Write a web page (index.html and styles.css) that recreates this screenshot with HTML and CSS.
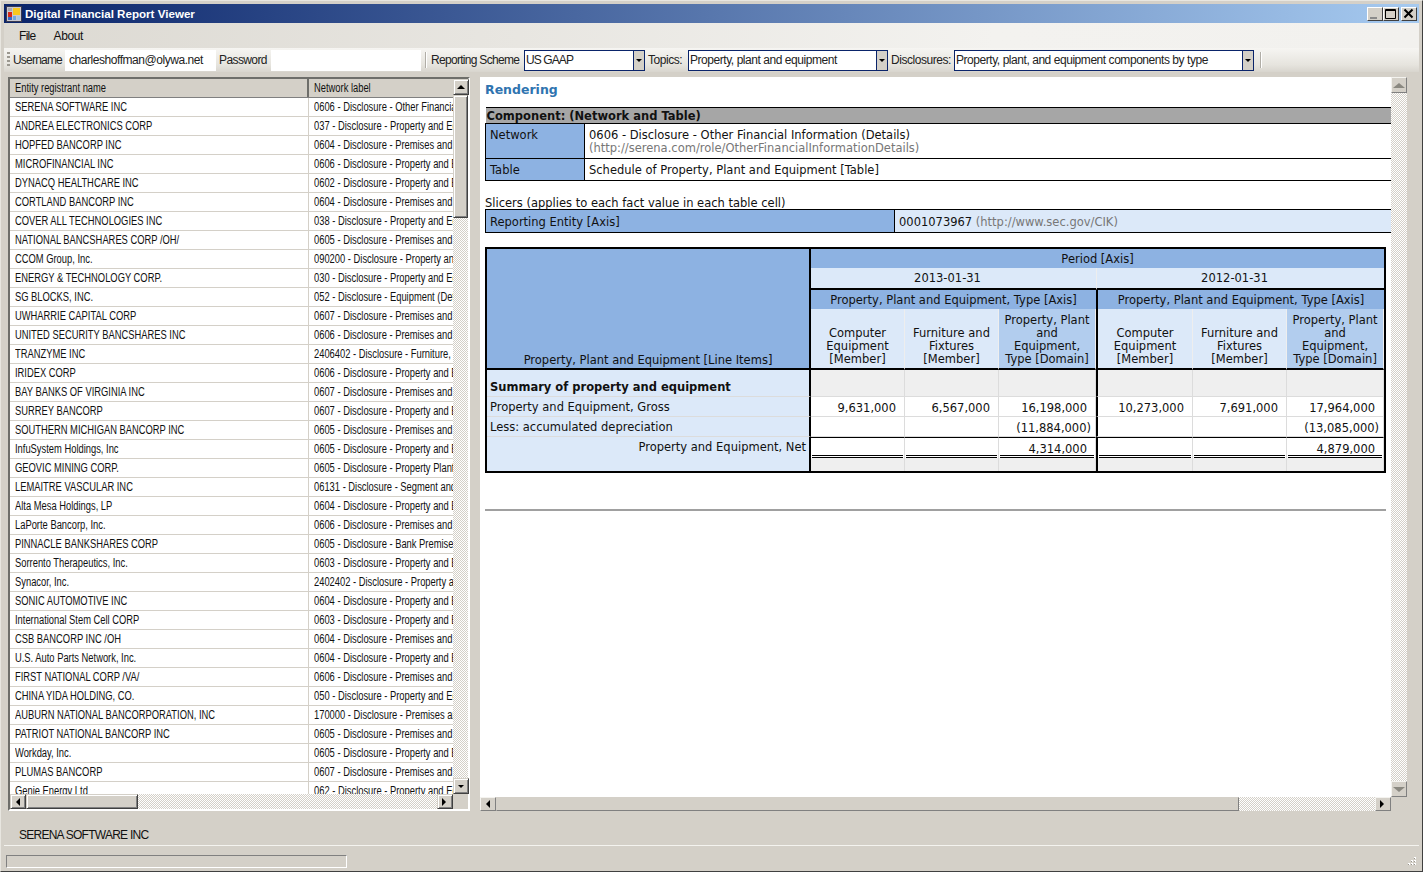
FILE: index.html
```html
<!DOCTYPE html>
<html lang="en">
<head>
<meta charset="utf-8">
<title>Digital Financial Report Viewer</title>
<link rel="stylesheet" href="styles.css">
</head>
<body>
<div class="window">
  <header class="titlebar">
    <svg class="appicon" width="16" height="16" viewBox="0 0 16 16"><rect x="0.5" y="0.5" width="15" height="15" fill="#c8c8d0" stroke="#3a3a50"/><rect x="2" y="2" width="4" height="3" fill="#a8a8b0"/><rect x="2" y="6" width="4" height="5" fill="#d82818"/><rect x="2" y="11" width="4" height="3" fill="#3868c8"/><rect x="7" y="2" width="7" height="7" fill="#f8c820"/><rect x="7" y="10" width="3" height="4" fill="#70a8e0"/><rect x="11" y="10" width="3" height="4" fill="#a8c8e8"/></svg>
    <span class="title">Digital Financial Report Viewer</span>
    <div class="capbtns">
      <span class="capbtn"><svg width="16" height="14" viewBox="0 0 16 14"><rect x="3" y="10" width="7" height="2" fill="#8a8a8a"/></svg></span>
      <span class="capbtn"><svg width="16" height="14" viewBox="0 0 16 14"><path d="M2.5 2.5h10v9h-10z M2.5 3.5h10" fill="none" stroke="#000"/></svg></span>
      <span class="capbtn gap"><svg width="16" height="14" viewBox="0 0 16 14"><path d="M3.5 2.5l8 8M11.5 2.5l-8 8" fill="none" stroke="#000" stroke-width="2"/></svg></span>
    </div>
  </header>
  <nav class="menubar"><span class="menu">File</span><span class="menu">About</span></nav>
  <div class="toolstrip">
    <span class="grip"></span>
    <span class="tlabel lu">Username</span>
    <span class="tinput user">charleshoffman@olywa.net</span>
    <span class="tlabel pw">Password</span>
    <span class="tinput pass"></span>
    <span class="sep"></span>
    <span class="tlabel rs">Reporting Scheme</span>
    <span class="combo c1"><span class="val">US GAAP</span><span class="drop"><i class="tri down"></i></span></span>
    <span class="tlabel tp">Topics:</span>
    <span class="combo c2"><span class="val">Property, plant and equipment</span><span class="drop"><i class="tri down"></i></span></span>
    <span class="tlabel tp ds">Disclosures:</span>
    <span class="combo c3"><span class="val">Property, plant, and equipment components by type</span><span class="drop"><i class="tri down"></i></span></span>
    <span class="sep last"></span>
  </div>
  <main class="content">
    <section class="grid">
      <div class="grid-main">
        <div class="grid-view">
          <div class="ghead"><span class="c-a"><span class="t">Entity registrant name</span></span><span class="c-b"><span class="t">Network label</span></span></div>
          <div class="grow"><span class="c-a"><span class="t">SERENA SOFTWARE INC</span></span><span class="c-b"><span class="t">0606 - Disclosure - Other Financial Information (Details)</span></span></div>
          <div class="grow"><span class="c-a"><span class="t">ANDREA ELECTRONICS CORP</span></span><span class="c-b"><span class="t">037 - Disclosure - Property and Equipment (Details)</span></span></div>
          <div class="grow"><span class="c-a"><span class="t">HOPFED BANCORP INC</span></span><span class="c-b"><span class="t">0604 - Disclosure - Premises and Equipment</span></span></div>
          <div class="grow"><span class="c-a"><span class="t">MICROFINANCIAL INC</span></span><span class="c-b"><span class="t">0606 - Disclosure - Property and Equipment</span></span></div>
          <div class="grow"><span class="c-a"><span class="t">DYNACQ HEALTHCARE INC</span></span><span class="c-b"><span class="t">0602 - Disclosure - Property and Equipment</span></span></div>
          <div class="grow"><span class="c-a"><span class="t">CORTLAND BANCORP INC</span></span><span class="c-b"><span class="t">0604 - Disclosure - Premises and Equipment</span></span></div>
          <div class="grow"><span class="c-a"><span class="t">COVER ALL TECHNOLOGIES INC</span></span><span class="c-b"><span class="t">038 - Disclosure - Property and Equipment</span></span></div>
          <div class="grow"><span class="c-a"><span class="t">NATIONAL BANCSHARES CORP /OH/</span></span><span class="c-b"><span class="t">0605 - Disclosure - Premises and Equipment</span></span></div>
          <div class="grow"><span class="c-a"><span class="t">CCOM Group, Inc.</span></span><span class="c-b"><span class="t">090200 - Disclosure - Property and Equipment</span></span></div>
          <div class="grow"><span class="c-a"><span class="t">ENERGY &amp; TECHNOLOGY CORP.</span></span><span class="c-b"><span class="t">030 - Disclosure - Property and Equipment</span></span></div>
          <div class="grow"><span class="c-a"><span class="t">SG BLOCKS, INC.</span></span><span class="c-b"><span class="t">052 - Disclosure - Equipment (Details)</span></span></div>
          <div class="grow"><span class="c-a"><span class="t">UWHARRIE CAPITAL CORP</span></span><span class="c-b"><span class="t">0607 - Disclosure - Premises and Equipment</span></span></div>
          <div class="grow"><span class="c-a"><span class="t">UNITED SECURITY BANCSHARES INC</span></span><span class="c-b"><span class="t">0606 - Disclosure - Premises and Equipment</span></span></div>
          <div class="grow"><span class="c-a"><span class="t">TRANZYME INC</span></span><span class="c-b"><span class="t">2406402 - Disclosure - Furniture, Equipment</span></span></div>
          <div class="grow"><span class="c-a"><span class="t">IRIDEX CORP</span></span><span class="c-b"><span class="t">0606 - Disclosure - Property and Equipment</span></span></div>
          <div class="grow"><span class="c-a"><span class="t">BAY BANKS OF VIRGINIA INC</span></span><span class="c-b"><span class="t">0607 - Disclosure - Premises and Equipment</span></span></div>
          <div class="grow"><span class="c-a"><span class="t">SURREY BANCORP</span></span><span class="c-b"><span class="t">0607 - Disclosure - Property and Equipment</span></span></div>
          <div class="grow"><span class="c-a"><span class="t">SOUTHERN MICHIGAN BANCORP INC</span></span><span class="c-b"><span class="t">0605 - Disclosure - Premises and Equipment</span></span></div>
          <div class="grow"><span class="c-a"><span class="t">InfuSystem Holdings, Inc</span></span><span class="c-b"><span class="t">0605 - Disclosure - Property and Equipment</span></span></div>
          <div class="grow"><span class="c-a"><span class="t">GEOVIC MINING CORP.</span></span><span class="c-b"><span class="t">0605 - Disclosure - Property Plant and Equipment</span></span></div>
          <div class="grow"><span class="c-a"><span class="t">LEMAITRE VASCULAR INC</span></span><span class="c-b"><span class="t">06131 - Disclosure - Segment and Geographic</span></span></div>
          <div class="grow"><span class="c-a"><span class="t">Alta Mesa Holdings, LP</span></span><span class="c-b"><span class="t">0604 - Disclosure - Property and Equipment</span></span></div>
          <div class="grow"><span class="c-a"><span class="t">LaPorte Bancorp, Inc.</span></span><span class="c-b"><span class="t">0606 - Disclosure - Premises and Equipment</span></span></div>
          <div class="grow"><span class="c-a"><span class="t">PINNACLE BANKSHARES CORP</span></span><span class="c-b"><span class="t">0605 - Disclosure - Bank Premises and Equipment</span></span></div>
          <div class="grow"><span class="c-a"><span class="t">Sorrento Therapeutics, Inc.</span></span><span class="c-b"><span class="t">0603 - Disclosure - Property and Equipment</span></span></div>
          <div class="grow"><span class="c-a"><span class="t">Synacor, Inc.</span></span><span class="c-b"><span class="t">2402402 - Disclosure - Property and Equipment</span></span></div>
          <div class="grow"><span class="c-a"><span class="t">SONIC AUTOMOTIVE INC</span></span><span class="c-b"><span class="t">0604 - Disclosure - Property and Equipment</span></span></div>
          <div class="grow"><span class="c-a"><span class="t">International Stem Cell CORP</span></span><span class="c-b"><span class="t">0603 - Disclosure - Property and Equipment</span></span></div>
          <div class="grow"><span class="c-a"><span class="t">CSB BANCORP INC /OH</span></span><span class="c-b"><span class="t">0604 - Disclosure - Premises and Equipment</span></span></div>
          <div class="grow"><span class="c-a"><span class="t">U.S. Auto Parts Network, Inc.</span></span><span class="c-b"><span class="t">0604 - Disclosure - Property and Equipment</span></span></div>
          <div class="grow"><span class="c-a"><span class="t">FIRST NATIONAL CORP /VA/</span></span><span class="c-b"><span class="t">0606 - Disclosure - Premises and Equipment</span></span></div>
          <div class="grow"><span class="c-a"><span class="t">CHINA YIDA HOLDING, CO.</span></span><span class="c-b"><span class="t">050 - Disclosure - Property and Equipment</span></span></div>
          <div class="grow"><span class="c-a"><span class="t">AUBURN NATIONAL BANCORPORATION, INC</span></span><span class="c-b"><span class="t">170000 - Disclosure - Premises and Equipment</span></span></div>
          <div class="grow"><span class="c-a"><span class="t">PATRIOT NATIONAL BANCORP INC</span></span><span class="c-b"><span class="t">0605 - Disclosure - Premises and Equipment</span></span></div>
          <div class="grow"><span class="c-a"><span class="t">Workday, Inc.</span></span><span class="c-b"><span class="t">0605 - Disclosure - Property and Equipment</span></span></div>
          <div class="grow"><span class="c-a"><span class="t">PLUMAS BANCORP</span></span><span class="c-b"><span class="t">0607 - Disclosure - Premises and Equipment</span></span></div>
          <div class="grow"><span class="c-a"><span class="t">Genie Energy Ltd</span></span><span class="c-b"><span class="t">062 - Disclosure - Property and Equipment</span></span></div>
        </div>
        <div class="vbar">
          <span class="sbtn"><i class="tri up"></i></span>
          <span class="vthumb"></span>
          <span class="track"></span>
          <span class="sbtn"><i class="tri down"></i></span>
        </div>
      </div>
      <div class="hbar">
        <span class="sbtn"><i class="tri left"></i></span>
        <span class="hthumb"></span>
        <span class="track"></span>
        <span class="sbtn"><i class="tri right"></i></span>
      </div>
    </section>
    <section class="panel">
      <div class="panel-main">
        <div class="doc">
          <h2 class="rendering">Rendering</h2>
          <table class="meta">
            <colgroup><col class="mk"><col></colgroup>
            <tr><th colspan="2" class="comp">Component: (Network and Table)</th></tr>
            <tr class="r-net"><td class="key">Network</td><td class="v">0606 - Disclosure - Other Financial Information (Details)<br><span class="uri">(http://serena.com/role/OtherFinancialInformationDetails)</span></td></tr>
            <tr class="r-tab"><td class="key">Table</td><td class="v">Schedule of Property, Plant and Equipment [Table]</td></tr>
          </table>
          <p class="slicers">Slicers (applies to each fact value in each table cell)</p>
          <table class="slicer">
            <colgroup><col class="sk"><col></colgroup>
            <tr><td class="skey">Reporting Entity [Axis]</td><td class="sval">0001073967 <span class="uri">(http://www.sec.gov/CIK)</span></td></tr>
          </table>
          <table class="report">
            <colgroup><col class="w-l"><col class="w1"><col class="w2"><col class="w3"><col class="w4"><col class="w5"><col class="w6"></colgroup>
            <tr class="h1"><th rowspan="4" class="li">Property, Plant and Equipment [Line Items]</th><th colspan="6" class="blue">Period [Axis]</th></tr>
            <tr class="h2"><th colspan="3" class="pale">2013-01-31</th><th colspan="3" class="pale">2012-01-31</th></tr>
            <tr class="h3"><th colspan="3" class="blue axis">Property, Plant and Equipment, Type [Axis]</th><th colspan="3" class="blue axis bl">Property, Plant and Equipment, Type [Axis]</th></tr>
            <tr class="h4"><th class="pale mem">Computer Equipment [Member]</th><th class="pale mem">Furniture and Fixtures [Member]</th><th class="mid mem">Property, Plant and Equipment, Type [Domain]</th><th class="pale mem bl">Computer Equipment [Member]</th><th class="pale mem">Furniture and Fixtures [Member]</th><th class="mid mem">Property, Plant and Equipment, Type [Domain]</th></tr>
            <tr class="b1"><td class="lab strong">Summary of property and equipment</td><td class="gr"></td><td class="gr"></td><td class="gr"></td><td class="gr bl"></td><td class="gr"></td><td class="gr"></td></tr>
            <tr class="b2"><td class="lab">Property and Equipment, Gross</td><td class="n">9,631,000</td><td class="n">6,567,000</td><td class="n">16,198,000</td><td class="n bl">10,273,000</td><td class="n">7,691,000</td><td class="n">17,964,000</td></tr>
            <tr class="b3"><td class="lab">Less: accumulated depreciation</td><td class="n"></td><td class="n"></td><td class="n neg">(11,884,000)</td><td class="n bl"></td><td class="n"></td><td class="n neg">(13,085,000)</td></tr>
            <tr class="b4"><td class="lab right">Property and Equipment, Net</td><td class="tot"><div></div></td><td class="tot"><div></div></td><td class="tot"><div>4,314,000</div></td><td class="tot bl"><div></div></td><td class="tot"><div></div></td><td class="tot"><div>4,879,000</div></td></tr>
            <tr class="b5"><td class="lab"></td><td class="gr"></td><td class="gr"></td><td class="gr"></td><td class="gr bl"></td><td class="gr"></td><td class="gr"></td></tr>
          </table>
          <hr class="rule">
        </div>
        <div class="vbar wide dim">
          <span class="sbtn"><i class="tri up"></i></span>
          <span class="track"></span>
          <span class="sbtn"><i class="tri down"></i></span>
        </div>
      </div>
      <div class="hbar pane">
        <span class="sbtn"><i class="tri left"></i></span>
        <span class="hthumb big"></span>
        <span class="track"></span>
        <span class="sbtn"><i class="tri right"></i></span>
      </div>
    </section>
  </main>
  <div class="selected">SERENA SOFTWARE INC</div>
  <footer class="statusbar">
    <span class="progress"></span>
    <svg class="rgrip" width="12" height="12" viewBox="0 0 12 12"><path d="M9 1h2v2H9zM6 4h2v2H6zM9 4h2v2H9zM3 7h2v2H3zM6 7h2v2H6zM9 7h2v2H9z" fill="#fff"/><path d="M9 2h1v1H9zM6 5h1v1H6zM9 5h1v1H9zM3 8h1v1H3zM6 8h1v1H6zM9 8h1v1H9z" fill="#9a968e"/></svg>
  </footer>
</div>
</body>
</html>
```
FILE: styles.css
```css
* { box-sizing: border-box; }
html, body { margin: 0; padding: 0; }
body { width: 1423px; height: 872px; overflow: hidden; background: #d4d0c8; font-family: "Liberation Sans", Arial, sans-serif; }
.window { width: 1423px; height: 872px; display: flex; flex-direction: column; background: #d4d0c8; border-style: solid; border-color: #e8e6e0 #404040 #404040 #e8e6e0; border-width: 1px; padding: 3px; overflow: hidden; }
.titlebar { flex: none; height: 19px; background: linear-gradient(90deg, #0a246a, #a6caf0); display: flex; align-items: center; padding-left: 2px; }
.appicon { flex: none; }
.title { margin-left: 3px; color: #fff; font: bold 11.6px "Liberation Sans", sans-serif; }
.capbtns { margin-left: auto; display: flex; padding-right: 2px; }
.capbtn { width: 16px; height: 14px; background: #d4d0c8; border: 1px solid; border-color: #fff #404040 #404040 #fff; display: block; overflow: hidden; }
.capbtn svg { display: block; margin: -1px; }
.capbtn.gap { margin-left: 2px; }
.menubar { flex: none; height: 25px; display: flex; align-items: center; background: linear-gradient(90deg, #dcd9d2, #f3f2ef 70%, #f2f1ee); padding-left: 10px; font: 12px "Liberation Sans", sans-serif; letter-spacing: -0.4px; }
.menu { margin-right: 8px; padding: 0 5px; color: #111; }
.menu:first-child { letter-spacing: -0.7px; }
.toolstrip { flex: none; height: 24px; display: flex; align-items: center; background: linear-gradient(180deg, #f6f5f2, #e6e4de 70%, #d8d5ce); padding-left: 3px; font: 12px "Liberation Sans", sans-serif; color: #222; white-space: nowrap; letter-spacing: -0.45px; }
.grip { width: 3px; height: 16px; margin-right: 3px; background: repeating-linear-gradient(180deg, #9b9890 0 2px, transparent 2px 4px); }
.tlabel { flex: none; }
.lu { width: 52px; letter-spacing: -0.8px; }
.tinput { flex: none; height: 21px; background: #fff; display: flex; align-items: center; padding-left: 4px; }
.user { width: 151px; letter-spacing: -0.45px; }
.pw { width: 52px; margin-left: 3px; letter-spacing: -0.6px; }
.pass { width: 150px; }
.sep { flex: none; width: 2px; height: 16px; background: linear-gradient(90deg, #b0ada6 50%, #fff 50%); margin: 0 4px 0 4px; }
.sep.last { margin-left: 3px; }
.combo { flex: none; height: 21px; display: flex; background: #fff; border: 1px solid #0a246a; margin-right: 3px; }
.rs { width: 93px; letter-spacing: -0.7px; }
.tp { width: 40px; }
.ds { width: 63px; }
.c1 { width: 121px; }
.c2 { width: 200px; }
.c3 { width: 300px; }
.val { flex: 1; padding-left: 1px; line-height: 18px; overflow: hidden; }
.c1 .val { letter-spacing: -0.9px; }
.drop { width: 11px; background: #d4d0c8; border-left: 1px solid #0a246a; display: flex; align-items: center; justify-content: center; }
.tri { display: block; width: 0; height: 0; border-style: solid; border-color: transparent; }
.tri.down { border-width: 3px 3px 0 3px; border-top-color: #000; }
.tri.up { border-width: 0 4px 4px 4px; border-bottom-color: #000; }
.tri.left { border-width: 4px 4px 4px 0; border-right-color: #000; }
.tri.right { border-width: 4px 0 4px 4px; border-left-color: #000; }
.content { flex: 1; min-height: 0; display: flex; padding: 5px 0 0 4px; }
.grid { flex: none; width: 462px; height: 734px; display: flex; flex-direction: column; border: 2px solid; border-color: #6e6e6a #fff #fff #6e6e6a; }
.grid-main { flex: 1; min-height: 0; display: flex; }
.grid-view { flex: 1; min-width: 0; overflow: hidden; background: #fff; font: 12px "Liberation Sans", sans-serif; color: #111; }
.ghead { height: 19px; display: flex; background: #d4d0c8; border-bottom: 1px solid #808080; line-height: 18px; }
.grow { height: 19px; display: flex; border-bottom: 1px solid #d4d0c8; line-height: 19px; white-space: nowrap; }
.c-a { flex: none; width: 299px; padding-left: 5px; border-right: 1px solid #d4d0c8; overflow: hidden; }
.ghead .c-a { border-right: 2px solid #6e6e6a; }
.c-b { flex: 1; min-width: 0; padding-left: 5px; overflow: hidden; }
.t { display: inline-block; transform: scaleX(0.78); transform-origin: 0 50%; }
.vbar { flex: none; width: 15px; display: flex; flex-direction: column; }
.vbar.wide { width: 16px; }
.hbar { flex: none; height: 15px; display: flex; margin-right: 15px; }
.sbtn { flex: none; width: 16px; height: 16px; background: #d4d0c8; border: 1px solid; border-color: #d4d0c8 #404040 #404040 #d4d0c8; box-shadow: inset 1px 1px #fff, inset -1px -1px #808080; display: flex; align-items: center; justify-content: center; }
.hbar .sbtn { height: 15px; }
.track { flex: 1; background: repeating-conic-gradient(#d4d0c8 0 25%, #fff 0 50%) 0 0 / 2px 2px; }
.vthumb { flex: none; height: 123px; background: #d4d0c8; border: 1px solid; border-color: #d4d0c8 #404040 #404040 #d4d0c8; box-shadow: inset 1px 1px #fff, inset -1px -1px #808080; }
.hthumb { flex: none; width: 112px; background: #d4d0c8; border: 1px solid; border-color: #d4d0c8 #404040 #404040 #d4d0c8; box-shadow: inset 1px 1px #fff, inset -1px -1px #808080; }
.hthumb.big { width: 743px; border-color: #d4d0c8 #808080 #808080 #d4d0c8; box-shadow: none; }
.dim .sbtn, .pane .sbtn { border-color: #f4f3ef #808080 #808080 #f4f3ef; box-shadow: none; }
.dim .tri.up { border-bottom-color: #8a8880; border-width: 0 6px 5px 6px; }
.dim .tri.down { border-top-color: #8a8880; border-width: 5px 6px 0 6px; }
.panel { flex: none; width: 927px; height: 734px; margin-left: 10px; display: flex; flex-direction: column; }
.panel-main { flex: 1; min-height: 0; display: flex; background: #fff; }
.doc { flex: 1; min-width: 0; overflow: hidden; padding: 0 0 0 5px; font: 11.5px/13px "DejaVu Sans", Verdana, sans-serif; color: #111; }
.hbar.pane { margin-right: 16px; height: 14px; }
.hbar.pane .sbtn { height: 14px; }
.rendering { margin: 5px 0 9px; font: bold 12.5px/16px "DejaVu Sans", Verdana, sans-serif; color: #2f74b0; }
.meta { width: 906px; border-collapse: collapse; table-layout: fixed; }
.mk { width: 99px; }
.meta .comp { background: #a6a6a6; text-align: left; font-weight: bold; padding: 2px 1px 0; height: 16px; line-height: 13px; border-top: 1px solid #000; color: #111; }
.meta td { border-top: 1px solid #000; border-bottom: 1px solid #000; padding: 0 4px; vertical-align: top; }
.meta .key { background: #8db2e2; border-left: 1px solid #000; border-right: 1px solid #000; }
.r-net td { height: 35px; padding-top: 5px; }
.r-tab td { height: 22px; padding-top: 5px; }
.uri { color: #777; }
.slicers { margin: 16px 0 0; line-height: 12px; }
.slicer { width: 906px; border-collapse: collapse; table-layout: fixed; }
.sk { width: 409px; }
.slicer td { height: 23px; border-top: 1px solid #000; border-bottom: 1px solid #000; padding: 2px 4px 0; }
.skey { background: #8db2e2; border-left: 1px solid #000; border-right: 1px solid #000; }
.sval { background: #dce9f9; }
.report { width: 901px; margin: 14px 0 0 0; table-layout: fixed; border-collapse: separate; border-spacing: 0; border: 2px solid #000; }
.report th, .report td { padding: 0; font-weight: normal; }
.w-l { width: 324px; } .w1 { width: 94px; } .w2 { width: 94px; } .w3 { width: 97px; } .w4 { width: 97px; } .w5 { width: 94px; } .w6 { width: 97px; }
.li { background: #8db2e2; vertical-align: bottom; text-align: center; padding-bottom: 1px !important; border-right: 2px solid #000; border-bottom: 2px solid #000; }
.blue { background: #8db2e2; }
.pale { background: #dce9f9; }
.mid { background: #b2cdee; }
.h1 th { height: 19px; }
.h1 th.blue { padding-top: 2px; }
.h2 th { height: 22px; border-bottom: 2px solid #000; padding: 1px 12px 0 0; }
.h2 th + th { border-left: 1px solid #eee; }
.h3 th { height: 19px; padding-top: 1px; }
.bl { border-left: 2px solid #000; }
.h4 th { height: 61px; vertical-align: bottom; padding: 0 3px 2px; line-height: 13px; border-bottom: 2px solid #000; border-right: 1px solid #eee; }
.lab { background: #dce9f9; padding-left: 3px !important; border-right: 2px solid #000; border-bottom: 1px solid #dcdcdc; }
.strong { font-weight: bold !important; }
.right { text-align: right; padding-right: 3px !important; }
.gr { background: #efefef; border-right: 1px solid #dcdcdc; border-bottom: 1px solid #dcdcdc; }
.n { text-align: right; padding-right: 8px !important; padding-top: 5px !important; border-right: 1px solid #dcdcdc; border-bottom: 1px solid #dcdcdc; background: #fff; vertical-align: top; }
.neg { padding-right: 4px !important; }
.b1 td { height: 27px; vertical-align: bottom; padding-bottom: 2px; }
.b2 td { height: 20px; }
.b3 td { height: 20px; }
.b4 td { height: 21px; }
.b5 td { height: 13px; }
.b2 .lab, .b3 .lab, .b4 .lab { vertical-align: top; padding-top: 4px; }
.b5 .lab, .b5 .gr, .b4 .lab { border-bottom: 0; }
.tot { border-top: 1px solid #000; border-right: 1px solid #dcdcdc; padding: 0 1px !important; background: #fff; vertical-align: top; }
.tot div { height: 20px; border-bottom: 3px double #000; text-align: right; padding: 5px 7px 0 0; line-height: 13px; }
.rule { margin: 36px 0 0 0; width: 901px; height: 2px; border: 0; background: #a0a0a0; }
.selected { flex: none; height: 29px; margin-top: 7px; padding-left: 15px; font: 12px/38px "Liberation Sans", sans-serif; letter-spacing: -0.75px; color: #111; }
.statusbar { flex: none; height: 23px; border-top: 1px solid #f4f3ef; display: flex; align-items: flex-end; padding-left: 2px; }
.progress { width: 341px; height: 13px; border: 1px solid; border-color: #808080 #fff #fff #808080; }
.rgrip { margin-left: auto; margin-right: 2px; }
```
